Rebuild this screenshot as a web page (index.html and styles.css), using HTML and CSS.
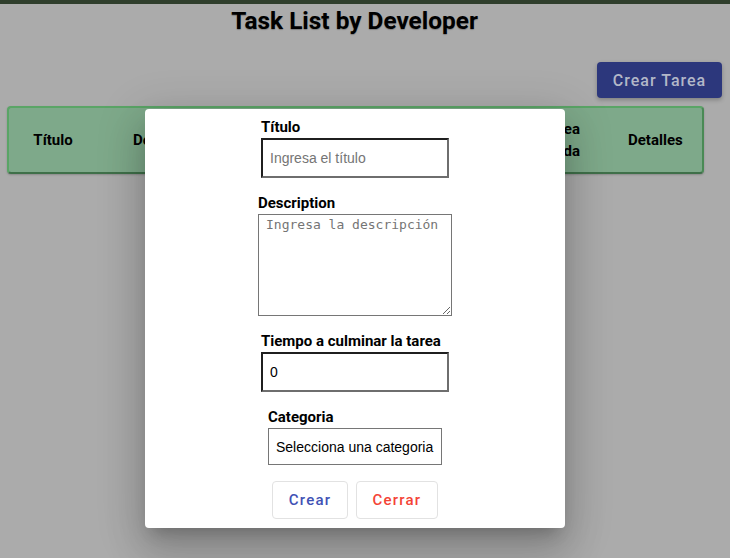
FILE: index.html
```html
<!DOCTYPE html>
<html lang="es">
<head>
<meta charset="utf-8">
<title>Task List by Developer</title>
<link rel="stylesheet" href="styles.css">
</head>
<body>
<div class="topbar"></div>
<main class="page">
  <h1 class="title">Task List by Developer</h1>
  <div class="actions">
    <button class="btn-primary" type="button">Crear Tarea</button>
  </div>
  <div class="thead">
    <div class="th th-title">Título</div>
    <div class="th th-desc">Descripción</div>
    <div class="th th-mid">Tiempo</div>
    <div class="th th-mid">Categoria</div>
    <div class="th th-done">Tarea<br>culminada</div>
    <div class="th th-det">Detalles</div>
  </div>
</main>

<div class="modal">
  <form class="form">
    <div class="field">
      <label class="label" for="t">Título</label>
      <input class="input" id="t" type="text" placeholder="Ingresa el título">
    </div>
    <div class="field">
      <label class="label" for="d">Description</label>
      <textarea class="textarea" id="d" placeholder="Ingresa la descripción"></textarea>
    </div>
    <div class="field">
      <label class="label" for="h">Tiempo a culminar la tarea</label>
      <input class="input" id="h" type="number" value="0">
    </div>
    <div class="field">
      <label class="label" for="c">Categoria</label>
      <select class="select" id="c">
        <option>Selecciona una categoria</option>
      </select>
    </div>
    <div class="buttons">
      <button class="btn-text btn-create" type="button">Crear</button>
      <button class="btn-text btn-close" type="button">Cerrar</button>
    </div>
  </form>
</div>
</body>
</html>
```

FILE: styles.css
```css
html, body {
  margin: 0;
  padding: 0;
}
body {
  background: #ababab;
  font-family: Roboto, "Liberation Sans", sans-serif;
  color: #000;
  height: 558px;
  overflow: hidden;
}
.topbar {
  height: 4px;
  background: #2f3e2c;
}
.page {
  padding: 0 8px 0 7px;
}
.title {
  margin: 2px 0 0;
  padding-right: 20px;
  font-size: 24.4px;
  line-height: 30px;
  font-weight: 700;
  text-align: center;
  text-shadow: 0 1px 1px rgba(0, 0, 0, 0.25);
}
.actions {
  display: flex;
  justify-content: flex-end;
  margin-top: 26px;
}
.btn-primary {
  width: 125px;
  height: 36px;
  border: none;
  border-radius: 4px;
  background: #2c377c;
  color: #b3b7c8;
  font-family: Roboto, sans-serif;
  font-size: 16px;
  font-weight: 500;
  letter-spacing: 1px;
  box-shadow: 0 2px 4px rgba(0, 0, 0, 0.25);
  padding: 0;
}
.thead {
  margin-top: 8px;
  width: 697px;
  height: 68px;
  box-sizing: border-box;
  border: 2px solid #5aa566;
  border-bottom-color: #3f7049;
  border-right-color: #4a8a55;
  border-radius: 4px;
  background: #7ea98a;
  display: grid;
  grid-template-columns: 88px 150px 120px 120px minmax(0, 1fr) 92px;
  align-items: center;
  font-size: 15px;
  font-weight: 700;
  line-height: 22px;
  box-shadow: 0 1px 2px rgba(0, 0, 0, 0.2);
}
.th {
  white-space: nowrap;
}
.th-title {
  text-align: center;
}
.th-desc {
  padding-left: 36px;
}
.th-done {
  text-align: right;
  padding-right: 30px;
}
.th-det {
  text-align: left;
  padding-left: 18px;
}

.modal {
  position: absolute;
  left: 145px;
  top: 109px;
  width: 420px;
  height: 419px;
  background: #fff;
  border-radius: 4px;
  box-shadow: 0 11px 15px -7px rgba(0, 0, 0, 0.2), 0 24px 38px 3px rgba(0, 0, 0, 0.14), 0 9px 46px 8px rgba(0, 0, 0, 0.12);
  box-sizing: border-box;
  padding-top: 9px;
}
.form {
  margin: 0;
  display: flex;
  flex-direction: column;
  align-items: center;
  gap: 16px;
}
.field {
  display: flex;
  flex-direction: column;
  align-items: flex-start;
  gap: 2px;
}
.label {
  font-size: 15px;
  font-weight: 700;
  line-height: 18px;
}
.input {
  width: 188px;
  height: 40px;
  box-sizing: border-box;
  border-width: 2px;
  border-style: solid;
  border-color: #1f1f1f #6e6e6e #6e6e6e #1f1f1f;
  padding: 0 7px;
  margin: 0;
  font-family: "Liberation Sans", Arial, sans-serif;
  font-size: 14px;
  color: #000;
  background: #fff;
  outline: none;
  -moz-appearance: textfield;
}
.input::-webkit-outer-spin-button,
.input::-webkit-inner-spin-button {
  -webkit-appearance: none;
  margin: 0;
}
.input::placeholder {
  color: #757575;
}
.textarea {
  width: 194px;
  height: 102px;
  box-sizing: border-box;
  border: 1px solid #767676;
  padding: 2px 7px;
  margin: 0;
  font-family: "DejaVu Sans Mono", monospace;
  font-size: 13px;
  line-height: 15px;
  color: #000;
  background: #fff;
  outline: none;
}
.textarea::placeholder {
  color: #757575;
}
.select {
  width: 174px;
  height: 37px;
  box-sizing: border-box;
  border: 1px solid #767676;
  border-radius: 0;
  padding: 0 7px;
  margin: 0;
  font-family: "Liberation Sans", Arial, sans-serif;
  font-size: 14px;
  color: #000;
  background: #fff;
  -webkit-appearance: none;
  appearance: none;
}
.buttons {
  display: flex;
  gap: 8px;
}
.btn-text {
  height: 38px;
  box-sizing: border-box;
  border: 1px solid #e2e2e2;
  border-radius: 4px;
  background: #fff;
  font-family: Roboto, sans-serif;
  font-size: 15px;
  font-weight: 500;
  letter-spacing: 1.2px;
  padding: 0;
}
.btn-create {
  width: 76px;
  color: #3f51b5;
}
.btn-close {
  width: 82px;
  color: #f44336;
}
```
